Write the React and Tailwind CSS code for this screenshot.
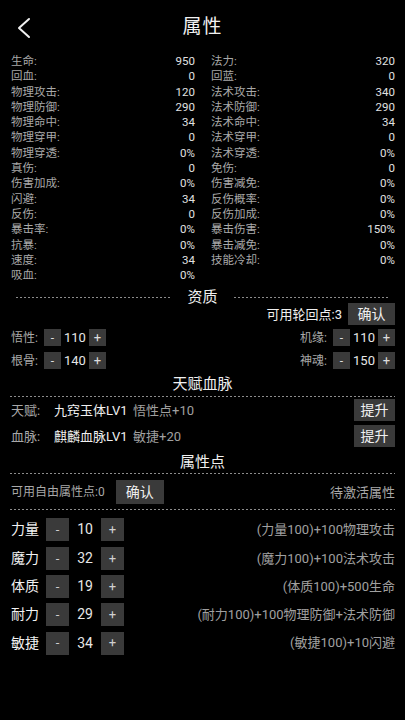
import React from "react";

const left = [
  ["生命", "950"], ["回血", "0"], ["物理攻击", "120"], ["物理防御", "290"], ["物理命中", "34"],
  ["物理穿甲", "0"], ["物理穿透", "0%"], ["真伤", "0"], ["伤害加成", "0%"], ["闪避", "34"],
  ["反伤", "0"], ["暴击率", "0%"], ["抗暴", "0%"], ["速度", "34"], ["吸血", "0%"],
];
const right = [
  ["法力", "320"], ["回蓝", "0"], ["法术攻击", "340"], ["法术防御", "290"], ["法术命中", "34"],
  ["法术穿甲", "0"], ["法术穿透", "0%"], ["免伤", "0"], ["伤害减免", "0%"], ["反伤概率", "0%"],
  ["反伤加成", "0%"], ["暴击伤害", "150%"], ["暴击减免", "0%"], ["技能冷却", "0%"],
];

const attrs = [
  ["力量", "10", "(力量100)+100物理攻击"],
  ["魔力", "32", "(魔力100)+100法术攻击"],
  ["体质", "19", "(体质100)+500生命"],
  ["耐力", "29", "(耐力100)+100物理防御+法术防御"],
  ["敏捷", "34", "(敏捷100)+10闪避"],
];

function StatCol({ items }) {
  return (
    <div className="flex flex-col">
      {items.map(([k, v]) => (
        <div key={k} className="flex justify-between h-[15.3px] leading-[15.3px] text-[11.5px]">
          <span className="text-[#a8a8a8]">{k}:</span>
          <span className="text-[#e0e0e0]">{v}</span>
        </div>
      ))}
    </div>
  );
}

function Dash({ className = "" }) {
  return (
    <div
      className={
        "h-px bg-[repeating-linear-gradient(90deg,#8c8c8c_0_2px,transparent_2px_4px)] " + className
      }
    />
  );
}

function SmallStepper({ label, value }) {
  return (
    <div className="flex items-center h-[17px] text-[12px]">
      <span className="text-[#a8a8a8] mr-[6px]">{label}:</span>
      <div className="w-[17px] h-[17px] bg-[#3a3a3a] flex items-center justify-center text-[#dcdcdc] text-[12px]">-</div>
      <span className="w-[28px] text-center text-[#e6e6e6] text-[13px]">{value}</span>
      <div className="w-[17px] h-[17px] bg-[#3a3a3a] flex items-center justify-center text-[#dcdcdc] text-[13px]">+</div>
    </div>
  );
}

export default function App() {
  return (
    <div
      className="w-[405px] h-[720px] bg-black text-white overflow-hidden"
      style={{ fontFamily: 'Roboto, "Noto Sans CJK SC", sans-serif' }}
    >
      {/* header */}
      <div className="relative h-[54px] flex items-center justify-center">
        <svg className="absolute left-[16px] top-[17px]" width="16" height="22" viewBox="0 0 16 22">
          <path d="M13 2 L3 11 L13 20" fill="none" stroke="#f0f0f0" strokeWidth="2" strokeLinecap="round" strokeLinejoin="round" />
        </svg>
        <span className="text-[19px] text-[#f2f2f2] tracking-[1px]">属性</span>
      </div>

      {/* stats */}
      <div className="grid grid-cols-2 gap-x-[16px] pl-[11px] pr-[10px]">
        <StatCol items={left} />
        <StatCol items={right} />
      </div>

      {/* 资质 divider */}
      <div className="flex items-center h-[16px] mt-[6px] px-[16px]">
        <Dash className="flex-1" />
        <span className="mx-[16px] text-[15px] text-[#f0f0f0] leading-[16px]">资质</span>
        <Dash className="flex-1" />
      </div>

      <div className="flex justify-end items-center pr-[10px] mt-[-2px]">
        <span className="text-[13px] text-[#f0f0f0] mr-[6px]">可用轮回点:3</span>
        <div className="w-[47px] h-[22px] bg-[#3a3a3a] flex items-center justify-center text-[14px] text-[#f0f0f0]">确认</div>
      </div>

      <div className="flex justify-between pl-[11px] pr-[10px] mt-[4px]">
        <SmallStepper label="悟性" value="110" />
        <SmallStepper label="机缘" value="110" />
      </div>
      <div className="flex justify-between pl-[11px] pr-[10px] mt-[6px]">
        <SmallStepper label="根骨" value="140" />
        <SmallStepper label="神魂" value="150" />
      </div>

      {/* 天赋血脉 */}
      <div className="mt-[5px] h-[20px] flex items-center justify-center text-[15px] text-[#f0f0f0]">天赋血脉</div>
      <Dash className="mx-[10px] mt-[2px]" />
      <div className="flex items-center pl-[11px] pr-[10px] h-[22px] mt-[2px] text-[13px]">
        <span className="text-[#a8a8a8] w-[43px]">天赋:</span>
        <span className="text-[#f0f0f0] w-[79px]">九窍玉体LV1</span>
        <span className="text-[#a0a0a0] flex-1">悟性点+10</span>
        <div className="w-[41px] h-[22px] bg-[#3a3a3a] flex items-center justify-center text-[14px] text-[#f0f0f0]">提升</div>
      </div>
      <div className="flex items-center pl-[11px] pr-[10px] h-[22px] mt-[4px] text-[13px]">
        <span className="text-[#a8a8a8] w-[43px]">血脉:</span>
        <span className="text-[#f0f0f0] w-[79px]">麒麟血脉LV1</span>
        <span className="text-[#a0a0a0] flex-1">敏捷+20</span>
        <div className="w-[41px] h-[22px] bg-[#3a3a3a] flex items-center justify-center text-[14px] text-[#f0f0f0]">提升</div>
      </div>

      {/* 属性点 */}
      <div className="mt-[5px] h-[20px] flex items-center justify-center text-[15px] text-[#f0f0f0]">属性点</div>
      <Dash className="mx-[10px] mt-[1px]" />
      <div className="flex items-center pl-[11px] pr-[10px] h-[24px] mt-[6px]">
        <span className="text-[12px] text-[#a8a8a8]">可用自由属性点:0</span>
        <div className="ml-[11px] w-[48px] h-[24px] bg-[#3a3a3a] flex items-center justify-center text-[14px] text-[#f0f0f0]">确认</div>
        <span className="ml-auto text-[13px] text-[#a8a8a8]">待激活属性</span>
      </div>
      <Dash className="mx-[10px] mt-[5px]" />

      <div className="flex flex-col gap-[5.3px] mt-[8px] pl-[11px] pr-[10px]">
        {attrs.map(([k, v, d]) => (
          <div key={k} className="flex items-center h-[23px]">
            <span className="text-[14px] text-[#f2f2f2] w-[35px]">{k}</span>
            <div className="w-[23px] h-[23px] bg-[#3a3a3a] flex items-center justify-center text-[#cfcfcf] text-[13px]">-</div>
            <span className="w-[32px] text-center text-[14px] text-[#e6e6e6]">{v}</span>
            <div className="w-[23px] h-[23px] bg-[#3a3a3a] flex items-center justify-center text-[#cfcfcf] text-[13px]">+</div>
            <span className="ml-auto text-[13px] text-[#a0a0a0]">{d}</span>
          </div>
        ))}
      </div>
    </div>
  );
}
